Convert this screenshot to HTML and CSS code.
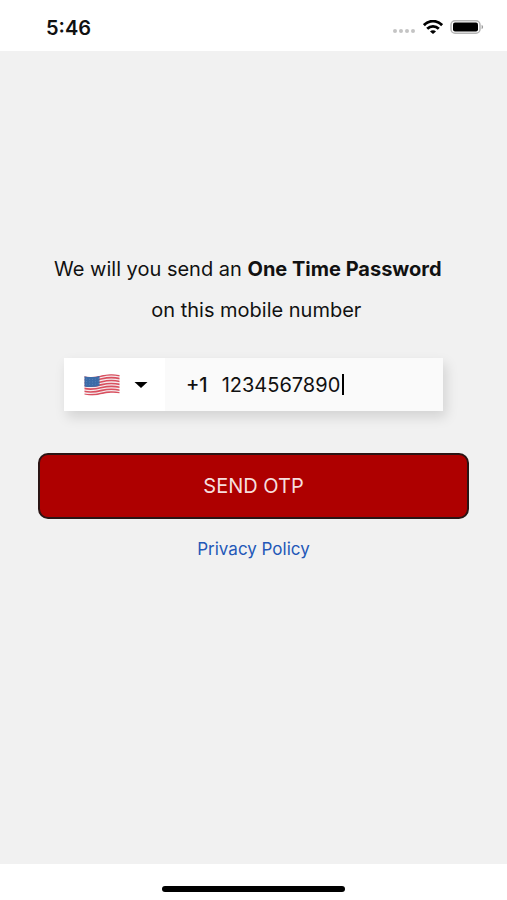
FILE: index.html
```html
<!DOCTYPE html>
<html lang="en">
<head>
    <meta charset="UTF-8">
    <meta name="viewport" content="width=device-width, initial-scale=1.0">
    <title>Verify Mobile Number</title>
    <link rel="stylesheet" href="styles.css">
</head>
<body>
    <header class="status-bar">
        <time class="status-time">5:46</time>
        <div class="status-icons">
            <svg class="signal-icon" width="24" height="14" viewBox="0 0 24 14" fill="#c4c4c4" aria-hidden="true">
                <circle cx="3" cy="9" r="2"/>
                <circle cx="9" cy="9" r="2"/>
                <circle cx="15" cy="9" r="2"/>
                <circle cx="21" cy="9" r="2"/>
            </svg>
            <svg class="wifi-icon" width="20" height="14" viewBox="0 0 20 14" fill="none" stroke="#000" stroke-width="2.8" aria-hidden="true">
                <path d="M.9 5.200C6-.2 14-.2 19.100 5.200"/>
                <path d="M4.200 8.700c3.300-3.200 8.300-3.200 11.600 0"/>
                <path d="M10 13.900 7 11.400c1.600-1.700 4.400-1.700 6 0z" fill="#000" stroke="none"/>
            </svg>
            <svg class="battery-icon" width="34" height="14" viewBox="0 0 34 14" aria-hidden="true">
                <rect x="1" y=".8" width="29" height="12.400" rx="4" fill="#fff" stroke="#b5b5b5" stroke-width="1.500"/>
                <rect x="3" y="2.500" width="25" height="9" rx="2" fill="#000"/>
                <path d="M31.600 4.800c2 .8 2 3.600 0 4.400z" fill="#999"/>
            </svg>
        </div>
    </header>

    <main class="content">
        <form class="otp-form">
            <p class="intro">We will you send an <strong>One Time Password</strong>&nbsp;&nbsp;<br>&nbsp;on this mobile number</p>

            <div class="phone-field">
                <div class="country-picker">
                    <svg class="flag" width="36" height="22" viewBox="0 0 36 22" aria-hidden="true">
                        <defs>
                            <clipPath id="wave">
                                <path d="M.5 2.300C7 3.800 12 2.800 18 1.300S30-.2 35.500 1v18.300c-6-1.300-11.500-.5-17.500 1S6.500 22 .5 20.500z"/>
                            </clipPath>
                        </defs>
                        <g clip-path="url(#wave)">
                            <rect width="36" height="22" fill="#f5e9ec"/>
                            <g fill="none" stroke="#d9505f" stroke-width="1.600">
                                <path d="M0 2.800C7 4.400 12 3.400 18 1.900S30 .4 36 1.700"/>
                                <path d="M0 5.700C7 7.300 12 6.300 18 4.800S30 3.300 36 4.600"/>
                                <path d="M0 8.600c7 1.600 12 .6 18-.9s12-1.500 18-.2"/>
                                <path d="M0 11.500c7 1.600 12 .6 18-.9s12-1.500 18-.2"/>
                                <path d="M0 14.400c7 1.600 12 .6 18-.9s12-1.500 18-.2"/>
                                <path d="M0 17.300c7 1.600 12 .6 18-.9s12-1.500 18-.2"/>
                                <path d="M0 20.200c7 1.600 12 .6 18-.9s12-1.500 18-.2"/>
                            </g>
                            <path d="M0 2c6 1.500 10.500 1 15.500-.3v10.100C10.500 13.100 6 13.500 0 12.400z" fill="#3c6ba8"/>
                            <g fill="none" stroke="#5c86ba" stroke-width=".8" stroke-dasharray="1 2">
                                <path d="M2 5c5 .8 8.500.6 13-.5"/>
                                <path d="M2 7.500c5 .8 8.500.6 13-.5"/>
                                <path d="M2 10c5 .8 8.500.6 13-.5"/>
                            </g>
                        </g>
                    </svg>
                    <svg class="arrow" width="14" height="8" viewBox="0 0 14 8" aria-hidden="true">
                        <path d="M.5 1h13L7 7z" fill="#000"/>
                    </svg>
                    <select class="country-select" name="country" aria-label="Country">
                        <option value="US" aria-label="United States"></option>
                    </select>
                </div>
                <label class="dial-code" for="phone">+1</label>
                <input class="phone-input" id="phone" name="phone" type="tel" value="1234567890">
                <span class="cursor"></span>
            </div>

            <button class="send-button" type="button">SEND OTP</button>
            <a class="privacy-link" href="#">Privacy Policy</a>
        </form>
    </main>

    <footer class="home-bar">
        <div class="home-indicator"></div>
    </footer>
</body>
</html>
```
FILE: styles.css
```css
:root {
    --primary-color: #ae0000;
    --link-color: #2358b8;
    --text-color: #111;
    --bg-color: #f1f1f1;
}

* {
    box-sizing: border-box;
}

body {
    display: flex;
    flex-direction: column;
    min-height: 100vh;
    margin: 0;
    font-family: Inter, "Liberation Sans", sans-serif;
    font-size: 20px;
    color: var(--text-color);
    background-color: #fff;
}

/* Status bar */
.status-bar {
    display: flex;
    justify-content: space-between;
    align-items: center;
    height: 51px;
    padding: 4px 23px 0 46px;
}

.status-time {
    font-weight: 600;
}

.status-icons {
    display: flex;
    align-items: center;
    gap: 7px;
    padding-bottom: 2px;
}

.signal-icon {
    margin-top: 4px;
}

/* Form */
.content {
    flex: 1;
    padding: 198px 38px 40px;
    background-color: var(--bg-color);
}

.otp-form {
    display: flex;
    flex-direction: column;
}

.intro {
    margin: 0 0 27px;
    line-height: 41px;
    text-align: center;
}

.intro strong {
    font-weight: 700;
}

.phone-field {
    display: flex;
    align-items: center;
    height: 53px;
    margin: 0 26px 42px;
    background-color: #fafafa;
    box-shadow: 3px 6px 12px rgba(0, 0, 0, 0.13);
}

.country-picker {
    position: relative;
    display: flex;
    align-items: center;
    gap: 14px;
    height: 100%;
    padding: 0 17px 0 20px;
    background-color: #fff;
}

.country-select {
    position: absolute;
    inset: 0;
    width: 100%;
    border: 0;
    background: transparent;
    appearance: none;
}

.dial-code {
    margin: 0 14px 0 21px;
    font-weight: 500;
}

.phone-input {
    width: 120px;
    padding: 0;
    border: 0;
    outline: 0;
    font: inherit;
    color: inherit;
    background: transparent;
}

.cursor {
    width: 2px;
    height: 21px;
    background-color: #000;
}

.send-button {
    height: 66px;
    border: 2px solid #2b1414;
    border-radius: 10px;
    font: inherit;
    color: #f6dede;
    background-color: var(--primary-color);
}

.privacy-link {
    align-self: center;
    margin-top: 20px;
    font-size: 17px;
    line-height: 20px;
    color: var(--link-color);
    text-decoration: none;
}

/* Home indicator */
.home-bar {
    display: flex;
    justify-content: center;
    height: 36px;
    padding-top: 22px;
}

.home-indicator {
    width: 36%;
    height: 6px;
    border-radius: 3px;
    background-color: #000;
}
```
